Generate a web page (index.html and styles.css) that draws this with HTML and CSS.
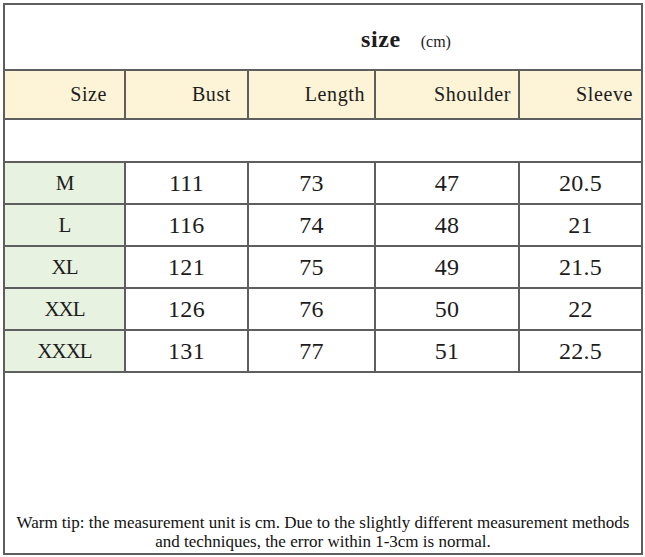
FILE: index.html
```html
<!DOCTYPE html>
<html>
<head>
<meta charset="utf-8">
<link rel="stylesheet" href="styles.css">
</head>
<body>
<div class="sheet">
  <div class="title-row">
    <span class="title">size</span><span class="unit">(cm)</span>
  </div>
  <div class="row head">
    <div class="cell h1">Size</div>
    <div class="cell h2">Bust</div>
    <div class="cell h3">Length</div>
    <div class="cell h4">Shoulder</div>
    <div class="cell h5">Sleeve</div>
  </div>
  <div class="blank"></div>
  <div class="row data">
    <div class="cell sz">M</div><div class="cell">111</div><div class="cell">73</div><div class="cell">47</div><div class="cell">20.5</div>
  </div>
  <div class="row data">
    <div class="cell sz">L</div><div class="cell">116</div><div class="cell">74</div><div class="cell">48</div><div class="cell">21</div>
  </div>
  <div class="row data">
    <div class="cell sz">XL</div><div class="cell">121</div><div class="cell">75</div><div class="cell">49</div><div class="cell">21.5</div>
  </div>
  <div class="row data">
    <div class="cell sz">XXL</div><div class="cell">126</div><div class="cell">76</div><div class="cell">50</div><div class="cell">22</div>
  </div>
  <div class="row data">
    <div class="cell sz">XXXL</div><div class="cell">131</div><div class="cell">77</div><div class="cell">51</div><div class="cell">22.5</div>
  </div>
  <div class="footer">
    <p class="note">Warm tip: the measurement unit is cm. Due to the slightly different measurement methods<br>and techniques, the error within 1-3cm is normal.</p>
  </div>
</div>
</body>
</html>
```
FILE: styles.css
```css
html, body {
  margin: 0;
  padding: 0;
  background: #ffffff;
}
body {
  padding: 3px 0 0 3px;
  font-family: "Liberation Serif", "DejaVu Serif", serif;
  color: #1c1c1c;
}
.sheet {
  box-sizing: border-box;
  width: 640px;
  height: 552px;
  border: 2px solid #5e5e5e;
  display: flex;
  flex-direction: column;
}
.title-row {
  height: 66px;
  border-bottom: 2px solid #5e5e5e;
  display: flex;
  align-items: baseline;
  padding-left: 356px;
  padding-top: 21px;
  box-sizing: border-box;
}
.title {
  font-size: 24px;
  font-weight: bold;
  letter-spacing: 0.6px;
}
.unit {
  font-size: 16px;
  margin-left: 20px;
}
.row {
  display: grid;
  grid-template-columns: 121px 123px 127px 144px 121px;
  border-bottom: 2px solid #5e5e5e;
}
.cell {
  border-right: 2px solid #5e5e5e;
  display: flex;
  align-items: center;
}
.cell:last-child {
  border-right: none;
}
.head {
  height: 49px;
  box-sizing: border-box;
  background: #fdf3d6;
}
.head .cell {
  justify-content: flex-end;
  font-size: 20px;
  letter-spacing: 0.6px;
}
.h1 { padding-right: 17px; }
.h2 { padding-right: 16px; }
.h3 { padding-right: 9px; }
.h4 { padding-right: 7px; }
.h5 { padding-right: 8px; }
.blank {
  height: 43px;
  box-sizing: border-box;
  border-bottom: 2px solid #5e5e5e;
}
.data {
  height: 42px;
  box-sizing: border-box;
}
.data .cell {
  justify-content: center;
  font-size: 24px;
  letter-spacing: 0.3px;
}
.data .sz {
  background: #e8f2e1;
  font-size: 21px;
  letter-spacing: -1px;
}
.footer {
  flex: 1;
  display: flex;
  align-items: flex-end;
  justify-content: center;
  padding-bottom: 2px;
}
.note {
  margin: 0;
  text-align: center;
  font-size: 17px;
  line-height: 19px;
  color: #111;
}
```
